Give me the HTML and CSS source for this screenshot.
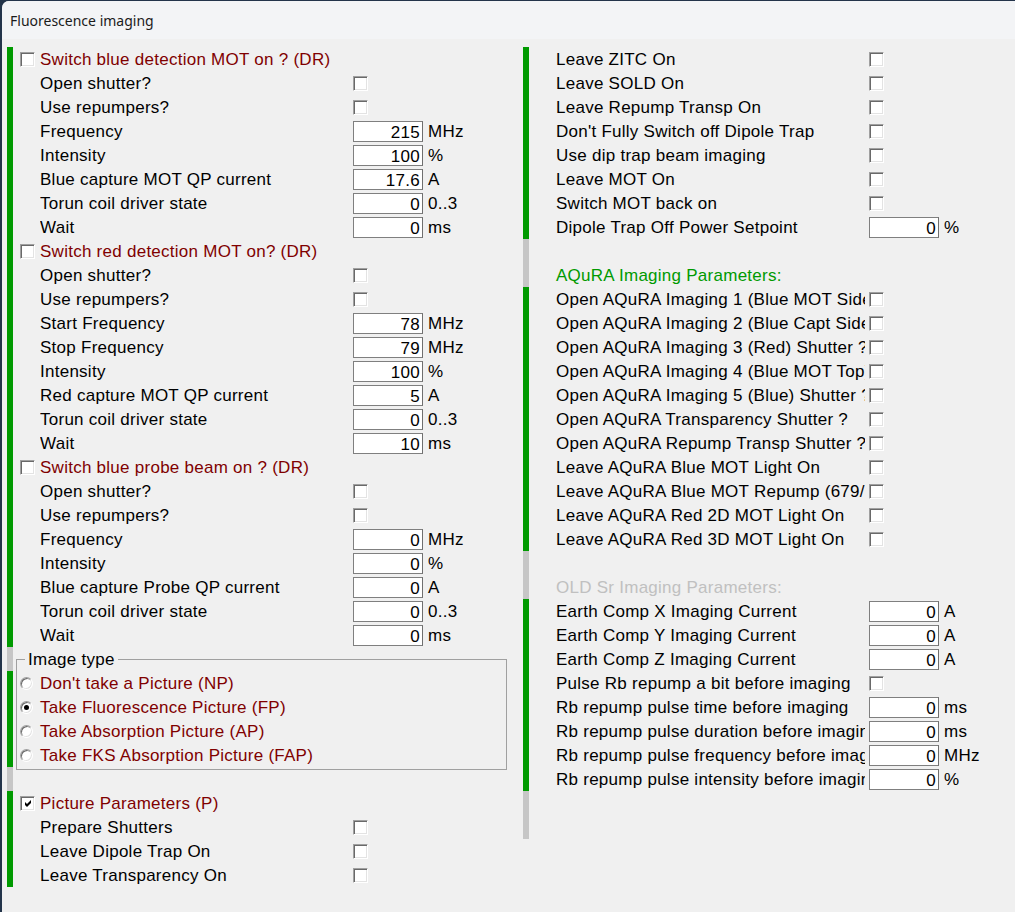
FILE: index.html
```html
<!DOCTYPE html>
<html>
<head>
<meta charset="utf-8">
<title>Fluorescence imaging</title>
<link rel="stylesheet" href="styles.css">
</head>
<body>
<div class="window">
  <div class="titlebar">Fluorescence imaging</div>
  <div class="content">
    <div class="col col-left">
      <section class="sec">
        <div class="bar"><i class="seg green"></i></div>
        <div class="rows">
          <div class="row head"><span class="cb"></span><span class="htext red">Switch blue detection MOT on ? (DR)</span></div>
          <div class="row"><span class="label">Open shutter?</span><span class="cb ctl"></span></div>
          <div class="row"><span class="label">Use repumpers?</span><span class="cb ctl"></span></div>
          <div class="row"><span class="label">Frequency</span><span class="field ctl">215</span><span class="unit">MHz</span></div>
          <div class="row"><span class="label">Intensity</span><span class="field ctl">100</span><span class="unit">%</span></div>
          <div class="row"><span class="label">Blue capture MOT QP current</span><span class="field ctl">17.6</span><span class="unit">A</span></div>
          <div class="row"><span class="label">Torun coil driver state</span><span class="field ctl">0</span><span class="unit">0..3</span></div>
          <div class="row"><span class="label">Wait</span><span class="field ctl">0</span><span class="unit">ms</span></div>
          <div class="row head"><span class="cb"></span><span class="htext red">Switch red detection MOT on? (DR)</span></div>
          <div class="row"><span class="label">Open shutter?</span><span class="cb ctl"></span></div>
          <div class="row"><span class="label">Use repumpers?</span><span class="cb ctl"></span></div>
          <div class="row"><span class="label">Start Frequency</span><span class="field ctl">78</span><span class="unit">MHz</span></div>
          <div class="row"><span class="label">Stop Frequency</span><span class="field ctl">79</span><span class="unit">MHz</span></div>
          <div class="row"><span class="label">Intensity</span><span class="field ctl">100</span><span class="unit">%</span></div>
          <div class="row"><span class="label">Red capture MOT QP current</span><span class="field ctl">5</span><span class="unit">A</span></div>
          <div class="row"><span class="label">Torun coil driver state</span><span class="field ctl">0</span><span class="unit">0..3</span></div>
          <div class="row"><span class="label">Wait</span><span class="field ctl">10</span><span class="unit">ms</span></div>
          <div class="row head"><span class="cb"></span><span class="htext red">Switch blue probe beam on ? (DR)</span></div>
          <div class="row"><span class="label">Open shutter?</span><span class="cb ctl"></span></div>
          <div class="row"><span class="label">Use repumpers?</span><span class="cb ctl"></span></div>
          <div class="row"><span class="label">Frequency</span><span class="field ctl">0</span><span class="unit">MHz</span></div>
          <div class="row"><span class="label">Intensity</span><span class="field ctl">0</span><span class="unit">%</span></div>
          <div class="row"><span class="label">Blue capture Probe QP current</span><span class="field ctl">0</span><span class="unit">A</span></div>
          <div class="row"><span class="label">Torun coil driver state</span><span class="field ctl">0</span><span class="unit">0..3</span></div>
          <div class="row"><span class="label">Wait</span><span class="field ctl">0</span><span class="unit">ms</span></div>
        </div>
      </section>
      <section class="sec sec-group">
        <div class="bar"><i class="seg gray fixed"></i><i class="seg green"></i><i class="seg gray fixed"></i></div>
        <div class="rows">
          <fieldset class="group">
            <legend>Image type</legend>
            <div class="row radio-row"><span class="radio"></span><span class="htext red">Don't take a Picture (NP)</span></div>
            <div class="row radio-row"><span class="radio on"></span><span class="htext red">Take Fluorescence Picture (FP)</span></div>
            <div class="row radio-row"><span class="radio"></span><span class="htext red">Take Absorption Picture (AP)</span></div>
            <div class="row radio-row"><span class="radio"></span><span class="htext red">Take FKS Absorption Picture (FAP)</span></div>
          </fieldset>
        </div>
      </section>
      <section class="sec">
        <div class="bar"><i class="seg green"></i></div>
        <div class="rows">
          <div class="row head"><span class="cb"><svg class="tick" viewBox="0 0 7 7" width="7" height="7"><path d="M0 2 L2 4 L6 0 L6 3 L2 7 L0 5 Z" fill="#000"/></svg></span><span class="htext red">Picture Parameters (P)</span></div>
          <div class="row"><span class="label">Prepare Shutters</span><span class="cb ctl"></span></div>
          <div class="row"><span class="label">Leave Dipole Trap On</span><span class="cb ctl"></span></div>
          <div class="row"><span class="label">Leave Transparency On</span><span class="cb ctl"></span></div>
        </div>
      </section>
    </div>

    <div class="col col-right">
      <section class="sec">
        <div class="bar"><i class="seg green"></i></div>
        <div class="rows">
          <div class="row"><span class="label">Leave ZITC On</span><span class="cb ctl"></span></div>
          <div class="row"><span class="label">Leave SOLD On</span><span class="cb ctl"></span></div>
          <div class="row"><span class="label">Leave Repump Transp On</span><span class="cb ctl"></span></div>
          <div class="row"><span class="label">Don't Fully Switch off Dipole Trap</span><span class="cb ctl"></span></div>
          <div class="row"><span class="label">Use dip trap beam imaging</span><span class="cb ctl"></span></div>
          <div class="row"><span class="label">Leave MOT On</span><span class="cb ctl"></span></div>
          <div class="row"><span class="label">Switch MOT back on</span><span class="cb ctl"></span></div>
          <div class="row"><span class="label">Dipole Trap Off Power Setpoint</span><span class="field ctl">0</span><span class="unit">%</span></div>
        </div>
      </section>
      <section class="sec">
        <div class="bar"><i class="seg gray"></i></div>
        <div class="rows">
          <div class="row"></div>
          <div class="row"><span class="title-green">AQuRA Imaging Parameters:</span></div>
        </div>
      </section>
      <section class="sec">
        <div class="bar"><i class="seg green"></i></div>
        <div class="rows">
          <div class="row"><span class="label">Open AQuRA Imaging 1 (Blue MOT Side) Shutter ?</span><span class="cb ctl"></span></div>
          <div class="row"><span class="label">Open AQuRA Imaging 2 (Blue Capt Side) Shutter ?</span><span class="cb ctl"></span></div>
          <div class="row"><span class="label">Open AQuRA Imaging 3 (Red) Shutter ?</span><span class="cb ctl"></span></div>
          <div class="row"><span class="label">Open AQuRA Imaging 4 (Blue MOT Top) Shutter ?</span><span class="cb ctl"></span></div>
          <div class="row"><span class="label">Open AQuRA Imaging 5 (Blue) Shutter ?</span><span class="cb ctl"></span></div>
          <div class="row"><span class="label">Open AQuRA Transparency Shutter ?</span><span class="cb ctl"></span></div>
          <div class="row"><span class="label">Open AQuRA Repump Transp Shutter ?</span><span class="cb ctl"></span></div>
          <div class="row"><span class="label">Leave AQuRA Blue MOT Light On</span><span class="cb ctl"></span></div>
          <div class="row"><span class="label">Leave AQuRA Blue MOT Repump (679/707) On</span><span class="cb ctl"></span></div>
          <div class="row"><span class="label">Leave AQuRA Red 2D MOT Light On</span><span class="cb ctl"></span></div>
          <div class="row"><span class="label">Leave AQuRA Red 3D MOT Light On</span><span class="cb ctl"></span></div>
        </div>
      </section>
      <section class="sec">
        <div class="bar"><i class="seg gray"></i></div>
        <div class="rows">
          <div class="row"></div>
          <div class="row"><span class="title-gray">OLD Sr Imaging Parameters:</span></div>
        </div>
      </section>
      <section class="sec">
        <div class="bar"><i class="seg green"></i></div>
        <div class="rows">
          <div class="row"><span class="label">Earth Comp X Imaging Current</span><span class="field ctl">0</span><span class="unit">A</span></div>
          <div class="row"><span class="label">Earth Comp Y Imaging Current</span><span class="field ctl">0</span><span class="unit">A</span></div>
          <div class="row"><span class="label">Earth Comp Z Imaging Current</span><span class="field ctl">0</span><span class="unit">A</span></div>
          <div class="row"><span class="label">Pulse Rb repump a bit before imaging</span><span class="cb ctl"></span></div>
          <div class="row"><span class="label">Rb repump pulse time before imaging</span><span class="field ctl">0</span><span class="unit">ms</span></div>
          <div class="row"><span class="label">Rb repump pulse duration before imaging</span><span class="field ctl">0</span><span class="unit">ms</span></div>
          <div class="row"><span class="label">Rb repump pulse frequency before imaging</span><span class="field ctl">0</span><span class="unit">MHz</span></div>
          <div class="row"><span class="label">Rb repump pulse intensity before imaging</span><span class="field ctl">0</span><span class="unit">%</span></div>
        </div>
      </section>
      <section class="sec">
        <div class="bar"><i class="seg gray"></i></div>
        <div class="rows">
          <div class="row"></div>
          <div class="row"></div>
        </div>
      </section>
    </div>
  </div>
</div>
</body>
</html>
```
FILE: styles.css
```css
html, body {
  margin: 0;
  padding: 0;
}
body {
  background: #23344a;
  font-family: "Liberation Sans", Arial, sans-serif;
  color: #000;
}
.window {
  margin: 1px 0 0 2px;
  background: #f0f0f0;
  border-top-left-radius: 7px;
  min-height: 911px;
  overflow: hidden;
}
.titlebar {
  height: 38px;
  box-sizing: border-box;
  padding: 1px 0 0 8px;
  display: flex;
  align-items: center;
  background: #f3f4f6;
  font-family: "Noto Sans", sans-serif;
  font-size: 14px;
  color: #1b1b1b;
}
.content {
  display: flex;
  align-items: flex-start;
  padding: 8px 0 0 5px;
  font-size: 17px;
  letter-spacing: 0.26px;
}
.col-left {
  width: 516px;
  flex: none;
}
.col-right {
  flex: 1;
}
.sec {
  display: flex;
}
.sec-group {
  height: 144px;
}
.bar {
  width: 6px;
  flex: none;
  display: flex;
  flex-direction: column;
}
.seg {
  flex: 1;
  display: block;
}
.seg.fixed {
  flex: 0 0 24px;
}
.seg.green { background: #009a00; }
.seg.gray { background: #c6c6c6; }
.rows {
  flex: 1;
  min-width: 0;
}
.row {
  height: 24px;
  display: flex;
  align-items: center;
  padding-left: 27px;
  white-space: nowrap;
}
.row.head {
  padding-left: 7px;
}
.label {
  width: 309px;
  flex: none;
  overflow: hidden;
  white-space: nowrap;
  padding-top: 2px;
}
.ctl {
  margin-left: 4px;
}
.htext {
  margin-left: 5px;
  padding-top: 2px;
}
.red { color: #800000; }
.title-green { color: #009a00; padding-top: 2px; }
.title-gray { color: #c0c0c0; padding-top: 2px; }
.cb {
  width: 15px;
  height: 15px;
  box-sizing: border-box;
  flex: none;
  background: #fff;
  border: 1px solid;
  border-color: #a0a0a0 #ffffff #ffffff #a0a0a0;
  box-shadow: inset 1px 1px 0 #696969, inset -1px -1px 0 #e3e3e3;
  display: flex;
  align-items: center;
  justify-content: center;
}
.tick {
  display: block;
  margin: 1px 0 0 1px;
}
.field {
  width: 70px;
  height: 21px;
  box-sizing: border-box;
  flex: none;
  background: #fff;
  border: 1px solid #7f7f7f;
  border-right-color: #6f6f6f;
  text-align: right;
  padding: 1px 2px 0 0;
  line-height: 19px;
}
.unit {
  margin-left: 5px;
  padding-top: 2px;
}
.group {
  margin: 0 0 0 3px;
  padding: 0 0 2px 0;
  width: 491px;
  box-sizing: border-box;
  border: 1px solid #a0a0a0;
  min-width: 0;
}
.group legend {
  margin-left: 8px;
  padding: 1px 3px 0;
  line-height: 24px;
  height: 24px;
  box-sizing: border-box;
}
.row.radio-row {
  padding-left: 3px;
}
.radio-row .htext {
  margin-left: 7px;
}
.radio {
  width: 13px;
  height: 13px;
  box-sizing: border-box;
  flex: none;
  border-radius: 50%;
  background: #fff;
  border: 1px solid;
  border-color: #a0a0a0 #ffffff #ffffff #a0a0a0;
  box-shadow: inset 1px 1px 0 #696969, inset -1px -1px 0 #e3e3e3;
  display: flex;
  align-items: center;
  justify-content: center;
}
.radio.on::after {
  content: "";
  width: 5px;
  height: 5px;
  border-radius: 50%;
  background: #000;
}
```
